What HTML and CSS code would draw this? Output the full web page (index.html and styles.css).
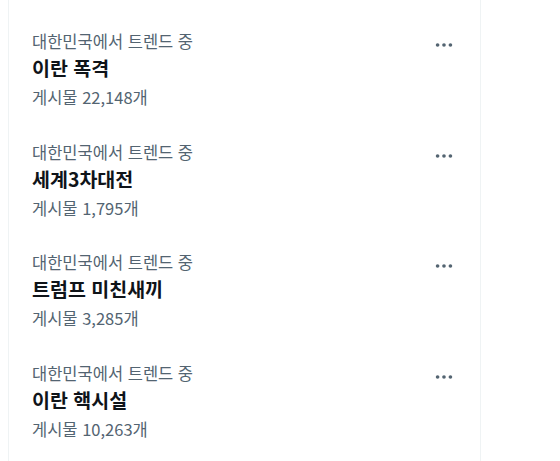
FILE: index.html
```html
<!DOCTYPE html>
<html lang="ko">
<head>
    <meta charset="UTF-8">
    <meta name="viewport" content="width=device-width, initial-scale=1.0">
    <title>트렌드</title>
    <link rel="stylesheet" href="styles.css">
</head>
<body>
    <div class="column">
        <!-- Trend list -->
        <div class="trend">
            <div class="trend-text">
                <div class="trend-meta">대한민국에서 트렌드 중</div>
                <div class="trend-title">이란 폭격</div>
                <div class="trend-count">게시물 22,148개</div>
            </div>
            <button class="more-btn" aria-label="더 보기">
                <svg viewBox="0 0 24 24" width="22" height="22"><circle cx="5" cy="12" r="2"/><circle cx="12" cy="12" r="2"/><circle cx="19" cy="12" r="2"/></svg>
            </button>
        </div>
        <div class="trend">
            <div class="trend-text">
                <div class="trend-meta">대한민국에서 트렌드 중</div>
                <div class="trend-title">세계3차대전</div>
                <div class="trend-count">게시물 1,795개</div>
            </div>
            <button class="more-btn" aria-label="더 보기">
                <svg viewBox="0 0 24 24" width="22" height="22"><circle cx="5" cy="12" r="2"/><circle cx="12" cy="12" r="2"/><circle cx="19" cy="12" r="2"/></svg>
            </button>
        </div>
        <div class="trend">
            <div class="trend-text">
                <div class="trend-meta">대한민국에서 트렌드 중</div>
                <div class="trend-title">트럼프 미친새끼</div>
                <div class="trend-count">게시물 3,285개</div>
            </div>
            <button class="more-btn" aria-label="더 보기">
                <svg viewBox="0 0 24 24" width="22" height="22"><circle cx="5" cy="12" r="2"/><circle cx="12" cy="12" r="2"/><circle cx="19" cy="12" r="2"/></svg>
            </button>
        </div>
        <div class="trend">
            <div class="trend-text">
                <div class="trend-meta">대한민국에서 트렌드 중</div>
                <div class="trend-title">이란 핵시설</div>
                <div class="trend-count">게시물 10,263개</div>
            </div>
            <button class="more-btn" aria-label="더 보기">
                <svg viewBox="0 0 24 24" width="22" height="22"><circle cx="5" cy="12" r="2"/><circle cx="12" cy="12" r="2"/><circle cx="19" cy="12" r="2"/></svg>
            </button>
        </div>
    </div>
</body>
</html>
```

FILE: styles.css
```css
:root {
    --text-color: #0f1419;
    --muted-color: #536471;
    --border-color: #eff3f4;
}

body {
    margin: 0;
    padding: 0 0 0 8px;
    background-color: #ffffff;
    font-family: "Noto Sans CJK KR", "Noto Sans", sans-serif;
    color: var(--text-color);
}

.column {
    width: 471px;
    min-height: 461px;
    padding-top: 14px;
    border-left: 1px solid var(--border-color);
    border-right: 1px solid var(--border-color);
}

.trend {
    display: flex;
    justify-content: space-between;
    align-items: flex-start;
    padding: 15px 22px 15.5px 23px;
}

.trend-meta,
.trend-count {
    font-size: 16.5px;
    line-height: 24px;
    color: var(--muted-color);
}

.trend-title {
    font-size: 19.5px;
    line-height: 30px;
    font-weight: 700;
}

.trend-count {
    margin-top: 2px;
}

.more-btn {
    display: flex;
    align-items: center;
    justify-content: center;
    width: 28px;
    height: 28px;
    margin-top: 2px;
    padding: 0;
    border: none;
    background: transparent;
    fill: var(--muted-color);
    cursor: pointer;
}
```
